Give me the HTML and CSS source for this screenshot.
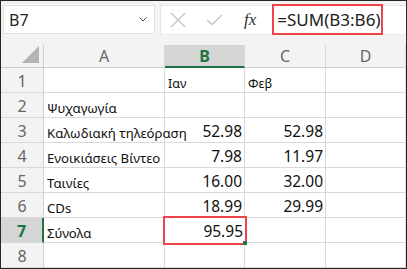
FILE: index.html
```html
<!DOCTYPE html>
<html lang="el">
<head>
    <meta charset="UTF-8">
    <title>Σύνολα</title>
    <link rel="stylesheet" href="styles.css">
</head>
<body>
    <div class="sheet">
        <div class="toolbar">
            <div class="name-box">
                <span>B7</span>
                <svg class="chevron" width="8" height="5" viewBox="0 0 8 5"><path d="M0.5 0.5 L4 4 L7.5 0.5" fill="none" stroke="#444" stroke-width="1"/></svg>
            </div>
            <div class="formula-bar">
                <svg class="tool-icon" width="16" height="16" viewBox="0 0 16 16"><path d="M1 1 L15 15 M15 1 L1 15" stroke="#c4c4c4" stroke-width="1.3"/></svg>
                <svg class="tool-icon" width="17" height="12" viewBox="0 0 17 12"><path d="M1 6 L6 10.5 L16 1" fill="none" stroke="#c4c4c4" stroke-width="1.3"/></svg>
                <span class="fx">fx</span>
                <div class="formula">=SUM(B3:B6)</div>
            </div>
        </div>

        <div class="grid">
            <div class="corner"><div class="corner-tri"></div></div>
            <div class="col-head">A</div>
            <div class="col-head active">B</div>
            <div class="col-head">C</div>
            <div class="col-head">D</div>

            <div class="row-head">1</div>
            <div class="cell"></div>
            <div class="cell label small">Ιαν</div>
            <div class="cell label small">Φεβ</div>
            <div class="cell"></div>

            <div class="row-head">2</div>
            <div class="cell label">Ψυχαγωγία</div>
            <div class="cell"></div>
            <div class="cell"></div>
            <div class="cell"></div>

            <div class="row-head">3</div>
            <div class="cell label">Καλωδιακή τηλεόραση</div>
            <div class="cell num">52.98</div>
            <div class="cell num">52.98</div>
            <div class="cell"></div>

            <div class="row-head">4</div>
            <div class="cell label">Ενοικιάσεις Βίντεο</div>
            <div class="cell num">7.98</div>
            <div class="cell num">11.97</div>
            <div class="cell"></div>

            <div class="row-head">5</div>
            <div class="cell label">Ταινίες</div>
            <div class="cell num">16.00</div>
            <div class="cell num">32.00</div>
            <div class="cell"></div>

            <div class="row-head">6</div>
            <div class="cell label">CDs</div>
            <div class="cell num">18.99</div>
            <div class="cell num">29.99</div>
            <div class="cell"></div>

            <div class="row-head active">7</div>
            <div class="cell label">Σύνολα</div>
            <div class="cell num selected">95.95<span class="handle"></span></div>
            <div class="cell"></div>
            <div class="cell"></div>

            <div class="row-head">8</div>
            <div class="cell"></div>
            <div class="cell"></div>
            <div class="cell"></div>
            <div class="cell"></div>
        </div>
    </div>
</body>
</html>
```

FILE: styles.css
```css
body {
    margin: 0;
    background-color: #ffffff;
}

.sheet {
    width: 405px;
    height: 267px;
    border: 1px solid #262626;
    border-right-width: 2px;
    background-color: #f3f3f3;
    overflow: hidden;
    font-family: 'Noto Sans', sans-serif;
}

.toolbar {
    display: flex;
    gap: 5px;
    padding: 4px 0 0 2px;
    height: 40px;
}

.name-box {
    width: 152px;
    height: 29px;
    background-color: #ffffff;
    border: 1px solid #e1e1e1;
    display: flex;
    align-items: center;
    justify-content: space-between;
    padding: 0 5px 0 5px;
    box-sizing: border-box;
    font-size: 16px;
    color: #262626;
}

.chevron {
    margin-right: 2px;
}

.formula-bar {
    flex: 1;
    height: 30px;
    background-color: #ffffff;
    border: 1px solid #e8e8e8;
    border-right: none;
    display: flex;
    align-items: center;
    box-sizing: border-box;
    padding-left: 9px;
}

.tool-icon {
    margin-right: 20px;
}

.tool-icon + .tool-icon {
    margin-right: 21px;
}

.fx {
    font-family: 'Liberation Serif', serif;
    font-style: italic;
    font-size: 17px;
    color: #333;
    margin-right: 16px;
}

.formula {
    height: 31px;
    width: 111px;
    box-sizing: border-box;
    border: 2px solid #f0434a;
    display: flex;
    align-items: center;
    padding-left: 3px;
    font-size: 17px;
    color: #222;
    margin-top: -1px;
}

.grid {
    display: grid;
    grid-template-columns: 43px 121px 80px 81px 1fr;
    grid-template-rows: 23px repeat(8, 25px);
    background-color: #ffffff;
}

.corner {
    background-color: #f3f3f3;
    border-right: 1px solid #d0d0d0;
    border-bottom: 1px solid #d0d0d0;
    position: relative;
}

.corner-tri {
    position: absolute;
    right: 4px;
    bottom: 4px;
    width: 0;
    height: 0;
    border-left: 17px solid transparent;
    border-bottom: 17px solid #b4b4b4;
}

.col-head {
    background-color: #f3f3f3;
    border-right: 1px solid #d8d8d8;
    border-bottom: 1px solid #d0d0d0;
    display: flex;
    align-items: center;
    justify-content: center;
    font-size: 16px;
    color: #666;
}

.col-head.active {
    background-color: #d5d5d5;
    border-bottom: 2px solid #217346;
    color: #217346;
    font-weight: bold;
}

.row-head {
    background-color: #f3f3f3;
    border-right: 1px solid #d0d0d0;
    border-bottom: 1px solid #d8d8d8;
    display: flex;
    align-items: center;
    justify-content: center;
    padding-top: 2px;
    font-size: 16px;
    color: #666;
}

.row-head.active {
    background-color: #d5d5d5;
    border-right: 2px solid #217346;
    color: #217346;
    font-weight: bold;
}

.cell {
    border-right: 1px solid #d9d9d9;
    border-bottom: 1px solid #d9d9d9;
    display: flex;
    align-items: flex-end;
    padding: 0 3px 0 3px;
    font-size: 14px;
    color: #111;
    white-space: nowrap;
    position: relative;
}

.label {
    font-size: 13.2px;
}

.small {
    font-size: 12.5px;
}

.num {
    justify-content: flex-end;
    font-size: 15.5px;
    padding-right: 2px;
}

.selected {
    border: 2px solid #f0434a;
    margin: -2px -2px -2px -2px;
    padding-right: 2px;
    padding-bottom: 1px;
    z-index: 1;
}

.handle {
    position: absolute;
    right: -2px;
    bottom: -2px;
    width: 4px;
    height: 4px;
    background-color: #217346;
}
```
